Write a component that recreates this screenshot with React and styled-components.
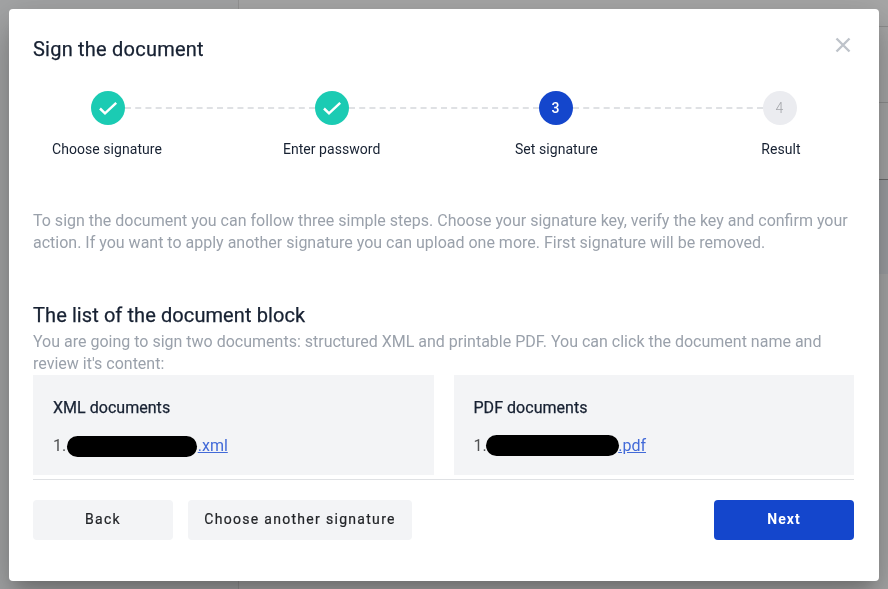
import React, { Fragment } from "react";
import styled, { createGlobalStyle } from "styled-components";

const GlobalStyle = createGlobalStyle`
  * { box-sizing: border-box; }
  body {
    margin: 0;
    overflow: hidden;
    font-family: Roboto, "Liberation Sans", sans-serif;
    color: #172132;
  }
  h2, h3, h4, p { margin: 0; font-weight: 400; }
  h2, h3, h4 { -webkit-text-stroke: 0.25px currentColor; }
`;

const Page = styled.div`
  display: grid;
  grid-template-columns: 238px 1px 1fr;
  width: 888px;
  height: 589px;
  background: #a6a6a7;
`;

const Sidebar = styled.div`
  background: #a4a5a6;
`;

const Divider = styled.div`
  background: #959595;
`;

const Content = styled.div`
  display: grid;
  grid-template-rows: 27px 76px 77px 94px 1fr;
`;

const Row = styled.div`
  background: ${(p) => p.$bg || "#a8a8a8"};
  border-bottom: ${(p) => (p.$line ? `1px solid ${p.$line}` : "none")};
`;

const Overlay = styled.div`
  position: fixed;
  inset: 0;
  padding: 9px 9px 8px;
`;

const Dialog = styled.section`
  display: flex;
  flex-direction: column;
  width: 870px;
  height: 572px;
  padding: 0 25px 0 24px;
  background: #fff;
  border-radius: 4px;
  box-shadow:
    0 11px 15px -7px rgba(0, 0, 0, 0.2),
    0 24px 38px 3px rgba(0, 0, 0, 0.14),
    0 9px 46px 8px rgba(0, 0, 0, 0.12);
`;

const Header = styled.header`
  display: flex;
  justify-content: space-between;
  align-items: flex-start;
  height: 82px;
  padding-top: 24px;
`;

const Title = styled.h2`
  font-size: 20px;
  line-height: 32px;
  letter-spacing: 0.22px;
`;

const CloseButton = styled.button`
  display: flex;
  margin: 4px 3px 0 0;
  padding: 0;
  border: 0;
  background: none;
`;

const Track = styled.div`
  display: flex;
  align-items: center;
  padding: 0 57px 0 58px;
`;

const Circle = styled.div`
  display: flex;
  flex: none;
  align-items: center;
  justify-content: center;
  width: 34px;
  height: 34px;
  padding-right: ${(p) => (p.$state === "done" ? 0 : 1)}px;
  border-radius: 50%;
  font-size: 14px;
  font-weight: ${(p) => (p.$state === "active" ? 500 : 300)};
  color: ${(p) => (p.$state === "active" ? "#fff" : "#a3a5a9")};
  background: ${(p) => ({ done: "#1bcbb3", active: "#1446cc", idle: "#ebecf0" })[p.$state]};
`;

const Connector = styled.div`
  flex: 1;
  border-top: 2px dashed #dfe1e4;
`;

const Labels = styled.div`
  display: flex;
  justify-content: space-between;
  margin: 14px -2px 0 -1px;
`;

const StepLabel = styled.div`
  width: 150px;
  text-align: center;
  font-size: 14px;
  line-height: 20px;
  letter-spacing: 0.05px;
`;

const Copy = styled.p`
  margin-top: ${(p) => p.$top}px;
  font-size: 16px;
  font-weight: 400;
  line-height: 22px;
  color: #9aa1ab;
`;

const SectionTitle = styled.h3`
  margin-top: 49px;
  font-size: 20px;
  line-height: 24px;
  letter-spacing: 0.09px;
`;

const Documents = styled.div`
  display: grid;
  grid-template-columns: 1fr 1fr;
  gap: 20px;
  height: 105px;
  padding-bottom: 4px;
  border-bottom: 1px solid #dfe1e4;
`;

const DocumentCard = styled.div`
  padding: 21px 20px 17px;
  background: #f3f4f6;
`;

const CardTitle = styled.h4`
  font-size: 16px;
  line-height: 24px;
  letter-spacing: 0.03px;
`;

const FileRow = styled.div`
  display: flex;
  margin-top: 14px;
  font-size: 16px;
  line-height: 24px;
  color: #505153;
`;

const Redaction = styled.span`
  width: ${(p) => p.$width}px;
  height: 21px;
  margin: ${(p) => p.$margin};
  border-radius: 11px;
  background: #000;
`;

const FileLink = styled.a`
  color: #426ad8;
  text-decoration: underline;
`;

const Actions = styled.footer`
  display: flex;
  gap: 15px;
  margin-top: 20px;
`;

const Button = styled.button`
  width: ${(p) => p.$width || 140}px;
  height: 40px;
  padding: 0 0 2px;
  margin-left: ${(p) => (p.$primary ? "auto" : 0)};
  border: 0;
  border-radius: 4px;
  font: ${(p) => (p.$primary ? 700 : 400)} 14px Roboto, sans-serif;
  letter-spacing: ${(p) => (p.$primary ? 1 : 1.3)}px;
  -webkit-text-stroke: ${(p) => (p.$primary ? 0 : 0.2)}px currentColor;
  color: ${(p) => (p.$primary ? "#fff" : "#222428")};
  background: ${(p) => (p.$primary ? "#1446cc" : "#f3f4f6")};
`;

const CheckIcon = () => (
  <svg width="20" height="16" viewBox="0 0 20 16" fill="none">
    <path d="M2 8.5 7 13.3 18.2 2.9" stroke="#fff" strokeWidth="2.5" />
  </svg>
);

const CloseIcon = () => (
  <svg width="16" height="16" viewBox="0 0 16 16" fill="none">
    <path d="m1.5 1.5 13 13m0-13-13 13" stroke="#bec3ca" strokeWidth="2.4" />
  </svg>
);

const steps = [
  { label: "Choose signature", state: "done" },
  { label: "Enter password", state: "done" },
  { label: "Set signature", state: "active" },
  { label: "Result", state: "idle" },
];

const documents = [
  { title: "XML documents", ext: ".xml", width: 130, margin: "2px 0.5px 0 1px" },
  { title: "PDF documents", ext: ".pdf", width: 133, margin: "1px -1px 0 -0.5px" },
];

export default function App() {
  return (
    <>
      <GlobalStyle />
      <Page>
        <Sidebar />
        <Divider />
        <Content>
          <Row $line="#8f8f8f" />
          <Row $line="#8f8f8f" />
          <Row $line="#6c6c6c" />
          <Row $bg="#9fa1a4" />
          <Row />
        </Content>
      </Page>
      <Overlay>
        <Dialog role="dialog" aria-label="Sign the document">
          <Header>
            <Title>Sign the document</Title>
            <CloseButton aria-label="Close"><CloseIcon /></CloseButton>
          </Header>
          <Track>
            {steps.map((step, i) => (
              <Fragment key={step.label}>
                {i > 0 && <Connector />}
                <Circle $state={step.state}>
                  {step.state === "done" ? <CheckIcon /> : i + 1}
                </Circle>
              </Fragment>
            ))}
          </Track>
          <Labels>
            {steps.map((step) => <StepLabel key={step.label}>{step.label}</StepLabel>)}
          </Labels>
          <Copy $top={51}>
            To sign the document you can follow three simple steps. Choose your signature key,
            verify the key and confirm your action. If you want to apply another signature you
            can upload one more. First signature will be removed.
          </Copy>
          <SectionTitle>The list of the document block</SectionTitle>
          <Copy $top={4}>
            You are going to sign two documents: structured XML and printable PDF. You can click
            the document name and review it's content:
          </Copy>
          <Documents>
            {documents.map((doc) => (
              <DocumentCard key={doc.ext}>
                <CardTitle>{doc.title}</CardTitle>
                <FileRow>
                  1.
                  <Redaction $width={doc.width} $margin={doc.margin} />
                  <FileLink>{doc.ext}</FileLink>
                </FileRow>
              </DocumentCard>
            ))}
          </Documents>
          <Actions>
            <Button>Back</Button>
            <Button $width={224}>Choose another signature</Button>
            <Button $primary>Next</Button>
          </Actions>
        </Dialog>
      </Overlay>
    </>
  );
}
